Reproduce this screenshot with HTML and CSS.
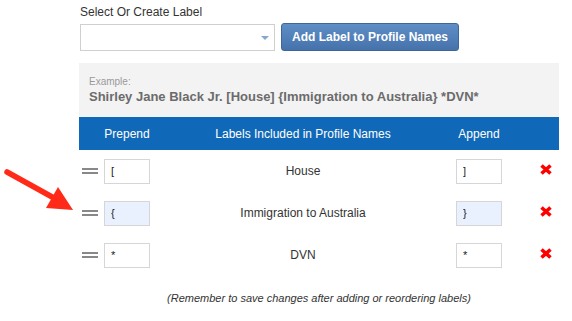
FILE: index.html
```html
<!DOCTYPE html>
<html lang="en">
<head>
    <meta charset="UTF-8">
    <meta name="viewport" content="width=device-width, initial-scale=1.0">
    <title>Profile Name Labels</title>
    <link rel="stylesheet" href="styles.css">
</head>
<body>

    <div class="page">
        <div class="field-label">Select Or Create Label</div>

        <div class="label-row">
            <div class="select-box">
                <span class="select-arrow"></span>
            </div>
            <button class="add-btn">Add Label to Profile Names</button>
        </div>

        <div class="example">
            <div class="example-title">Example:</div>
            <div class="example-text">Shirley Jane Black Jr. [House] {Immigration to Australia} *DVN*</div>
        </div>

        <div class="label-table">
            <div class="table-head">
                <div></div>
                <div>Prepend</div>
                <div>Labels Included in Profile Names</div>
                <div>Append</div>
                <div></div>
            </div>

            <div class="table-row">
                <div><span class="handle"></span></div>
                <div><input class="affix" type="text" value="["></div>
                <div class="label-name">House</div>
                <div><input class="affix" type="text" value="]"></div>
                <div class="delete-cell">
                    <svg width="12" height="11" viewBox="0 0 12 11"><path d="M1.5 1.5 L10.5 9.5 M10.5 1.5 L1.5 9.5" stroke="#ff0000" stroke-width="3.6"/></svg>
                </div>
            </div>

            <div class="table-row">
                <div><span class="handle"></span></div>
                <div><input class="affix active" type="text" value="{"></div>
                <div class="label-name">Immigration to Australia</div>
                <div><input class="affix active" type="text" value="}"></div>
                <div class="delete-cell">
                    <svg width="12" height="11" viewBox="0 0 12 11"><path d="M1.5 1.5 L10.5 9.5 M10.5 1.5 L1.5 9.5" stroke="#ff0000" stroke-width="3.6"/></svg>
                </div>
            </div>

            <div class="table-row">
                <div><span class="handle"></span></div>
                <div><input class="affix" type="text" value="*"></div>
                <div class="label-name">DVN</div>
                <div><input class="affix" type="text" value="*"></div>
                <div class="delete-cell">
                    <svg width="12" height="11" viewBox="0 0 12 11"><path d="M1.5 1.5 L10.5 9.5 M10.5 1.5 L1.5 9.5" stroke="#ff0000" stroke-width="3.6"/></svg>
                </div>
            </div>
        </div>

        <p class="note">(Remember to save changes after adding or reordering labels)</p>
    </div>

    <!-- annotation arrow pointing at the second row -->
    <svg class="pointer" width="80" height="50" viewBox="0 0 80 50">
        <line x1="7" y1="6" x2="54" y2="32" stroke="#ff2a17" stroke-width="5.5" stroke-linecap="round"/>
        <polygon points="58,21 73,44 46,42" fill="#ff2a17"/>
    </svg>

</body>
</html>
```

FILE: styles.css
```css
body {
    font-family: "Liberation Sans", Arial, sans-serif;
    margin: 0;
    padding: 0;
    background-color: #fff;
    color: #333;
}

.page {
    width: 480px;
    padding: 4px 0 0 79px;
}

.field-label {
    font-size: 12px;
    line-height: 16px;
    margin: 0 0 4px 1px;
    color: #333;
}

.label-row {
    display: flex;
    gap: 6px;
    margin-left: 1px;
}

.select-box {
    position: relative;
    width: 193px;
    height: 25px;
    border: 1px solid #cfcfcf;
    background-color: #fff;
}

.select-arrow {
    position: absolute;
    right: 5px;
    top: 11px;
    border-left: 4px solid transparent;
    border-right: 4px solid transparent;
    border-top: 4px solid #86a8cf;
}

.add-btn {
    width: 178px;
    height: 28px;
    margin-top: -1px;
    border: 1px solid #3d679a;
    border-radius: 3px;
    background: linear-gradient(#5e8ec6, #4672aa);
    color: #fff;
    font-family: "Liberation Sans", Arial, sans-serif;
    font-weight: bold;
    font-size: 12px;
    padding: 0;
    cursor: pointer;
}

.example {
    margin-top: 12px;
    height: 54px;
    box-sizing: border-box;
    padding: 12px 10px 0;
    background-color: #f3f3f3;
}

.example-title {
    font-size: 10px;
    line-height: 13px;
    color: #9a9a9a;
}

.example-text {
    font-size: 13px;
    line-height: 18px;
    font-weight: bold;
    color: #6b6b6b;
}

.table-head,
.table-row {
    display: grid;
    grid-template-columns: 21px 54px 298px 54px 53px;
    align-items: center;
    text-align: center;
}

.table-head {
    height: 33px;
    background-color: #1069b8;
    color: #fff;
    font-size: 12px;
}

.table-row {
    height: 42px;
    font-size: 12px;
}

.handle {
    display: block;
    width: 16px;
    height: 2px;
    margin-left: 3px;
    border-top: 2px solid #888;
    border-bottom: 2px solid #888;
}

.affix {
    display: block;
    width: 46px;
    height: 25px;
    box-sizing: border-box;
    margin: 0 auto;
    padding: 0 0 0 6px;
    border: 1px solid #d6d6d6;
    background-color: #fff;
    font-family: "Liberation Sans", Arial, sans-serif;
    font-size: 11px;
    color: #222;
    text-align: left;
}

.affix.active {
    background-color: #e8f1fd;
}

.label-name {
    color: #333;
}

.delete-cell {
    padding-left: 34px;
    line-height: 0;
}

.delete-cell svg {
    display: block;
    margin-top: -4px;
}

.note {
    margin: 15px 0 0;
    text-align: center;
    font-style: italic;
    font-size: 11px;
    line-height: 14px;
    color: #333;
}

.pointer {
    position: absolute;
    left: 0;
    top: 166px;
}
```
